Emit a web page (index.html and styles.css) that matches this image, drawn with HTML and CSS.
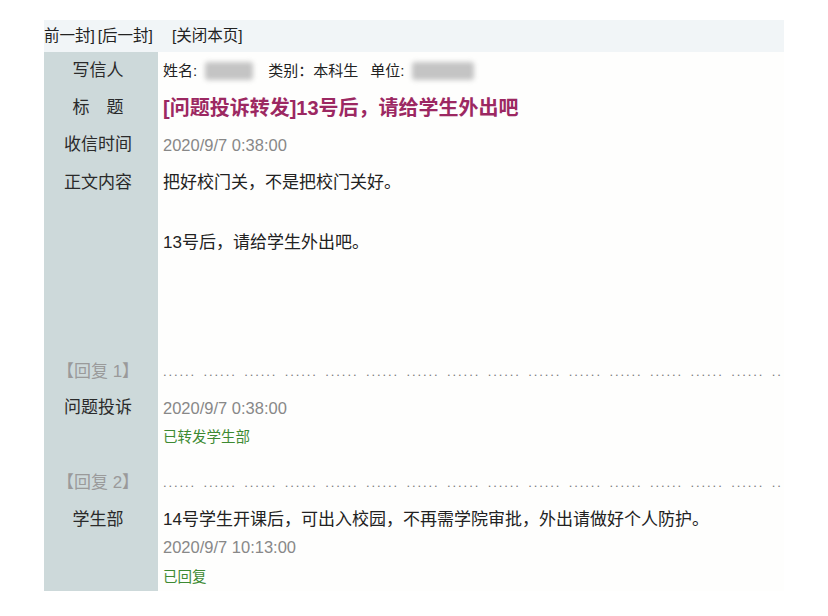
FILE: index.html
```html
<!DOCTYPE html>
<html lang="zh-CN">
<head>
<meta charset="utf-8">
<title>信件详情</title>
<link rel="stylesheet" href="styles.css">
</head>
<body>
<div class="page">
  <div class="nav">前一封]<span class="sp1"></span>[后一封]<span class="sp2"></span>[关闭本页]</div>
  <div class="grid">
    <div class="label row-a">写信人</div>
    <div class="cell row-a meta">姓名:<span class="blur b1"></span>类别：本科生<span class="sp3"></span>单位:<span class="blur b2"></span></div>

    <div class="label row-b">标　题</div>
    <div class="cell row-b title">[问题投诉转发]13号后，请给学生外出吧</div>

    <div class="label row-c">收信时间</div>
    <div class="cell row-c date">2020/9/7 0:38:00</div>

    <div class="label row-d">正文内容</div>
    <div class="cell row-d body">
      <p class="line">把好校门关，不是把校门关好。</p>
      <p class="line gap">13号后，请给学生外出吧。</p>
    </div>

    <div class="label row-e reply">【回复 1】</div>
    <div class="cell row-e dots">...... ...... ...... ...... ...... ...... ...... ...... ...... ...... ...... ...... ...... ...... ...... ..</div>

    <div class="label row-f">问题投诉</div>
    <div class="cell row-f">
      <p class="date d-first">2020/9/7 0:38:00</p>
      <p class="status s1">已转发学生部</p>
    </div>

    <div class="label row-e reply">【回复 2】</div>
    <div class="cell row-e dots">...... ...... ...... ...... ...... ...... ...... ...... ...... ...... ...... ...... ...... ...... ...... ..</div>

    <div class="label row-g">学生部</div>
    <div class="cell row-g">
      <p class="text">14号学生开课后，可出入校园，不再需学院审批，外出请做好个人防护。</p>
      <p class="date d-second">2020/9/7 10:13:00</p>
      <p class="status s2">已回复</p>
    </div>
  </div>
</div>
</body>
</html>
```

FILE: styles.css
```css
* { box-sizing: border-box; }
html, body { margin: 0; padding: 0; background: #ffffff; }
body {
  font-family: "Liberation Sans", "Noto Sans CJK SC", sans-serif;
  color: #222;
}
p { margin: 0; }
.page {
  padding-top: 20px;
  margin-left: 44px;
  width: 740px;
}
.nav {
  height: 32px;
  line-height: 31px;
  background: #f1f5f7;
  font-size: 15.5px;
  color: #222;
  white-space: nowrap;
}
.sp1 { display: inline-block; width: 3px; }
.sp2 { display: inline-block; width: 19px; }
.grid {
  display: grid;
  grid-template-columns: 114px 1fr;
  background: #fefefd;
}
.label {
  background: #cdd9da;
  text-align: center;
  padding-right: 6px;
  font-size: 17px;
  color: #2a2a2a;
  white-space: nowrap;
}
.cell {
  padding-left: 5px;
  white-space: nowrap;
}
.row-a { height: 38px; line-height: 38px; }
.row-b { height: 36px; line-height: 36px; }
.row-c { height: 38px; line-height: 38px; }
.row-d { height: 190px; }
.label.row-d { line-height: 38px; }
.row-e { height: 36px; line-height: 36px; }
.row-f { height: 75px; }
.label.row-f { line-height: 36px; }
.row-g { height: 90px; }
.label.row-g { line-height: 38px; }

.meta { font-size: 15px; color: #222; }
.blur {
  display: inline-block;
  height: 18px;
  vertical-align: -4px;
  background: #c4c4c4;
  filter: blur(2.5px);
  border-radius: 3px;
}
.b1 { width: 48px; margin: 0 15px 0 8px; }
.b2 { width: 62px; margin-left: 8px; }
.sp3 { display: inline-block; width: 12px; }

.title {
  font-size: 20px;
  font-weight: bold;
  color: #9c2862;
}
.date {
  font-size: 16.5px;
  color: #888888;
}
.body { padding-top: 4px; }
.line { font-size: 17px; line-height: 30px; color: #222; }
.line.gap { margin-top: 30px; }

.reply { color: #9a9a9a; }
.dots {
  font-size: 13px;
  letter-spacing: 1.9px;
  word-spacing: 2px;
  color: #7a7a7a;
  line-height: 36px;
}
.d-first { line-height: 36px; }
.status { font-size: 14.5px; color: #3d8a32; }
.s1 { line-height: 22px; }
.text { font-size: 17px; line-height: 30px; color: #222; padding-top: 4px; box-sizing: content-box; }
.d-second { line-height: 24px; }
.s2 { line-height: 28px; margin-top: 4px; }
```
